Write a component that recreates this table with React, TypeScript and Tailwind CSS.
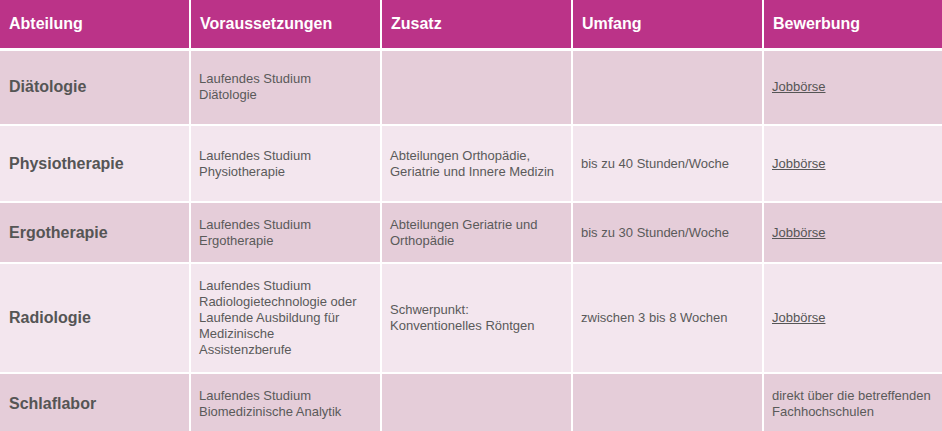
const rows: { name: string; req: string[]; extra: string[]; scope: string; apply: string[] | 'link'; h: string; tone: 'dark' | 'light' }[] = [
  { name: 'Diätologie', req: ['Laufendes Studium', 'Diätologie'], extra: [], scope: '', apply: 'link', h: 'h-[76px]', tone: 'dark' },
  {
    name: 'Physiotherapie',
    req: ['Laufendes Studium', 'Physiotherapie'],
    extra: ['Abteilungen Orthopädie,', 'Geriatrie und Innere Medizin'],
    scope: 'bis zu 40 Stunden/Woche',
    apply: 'link',
    h: 'h-[77px]',
    tone: 'light',
  },
  {
    name: 'Ergotherapie',
    req: ['Laufendes Studium', 'Ergotherapie'],
    extra: ['Abteilungen Geriatrie und', 'Orthopädie'],
    scope: 'bis zu 30 Stunden/Woche',
    apply: 'link',
    h: 'h-[61px]',
    tone: 'dark',
  },
  {
    name: 'Radiologie',
    req: ['Laufendes Studium', 'Radiologietechnologie oder', 'Laufende Ausbildung für', 'Medizinische', 'Assistenzberufe'],
    extra: ['Schwerpunkt:', 'Konventionelles Röntgen'],
    scope: 'zwischen 3 bis 8 Wochen',
    apply: 'link',
    h: 'h-[110px]',
    tone: 'light',
  },
  {
    name: 'Schlaflabor',
    req: ['Laufendes Studium', 'Biomedizinische Analytik'],
    extra: [],
    scope: '',
    apply: ['direkt über die betreffenden', 'Fachhochschulen'],
    h: 'h-[61px]',
    tone: 'dark',
  },
];

function Lines({ lines }: { lines: string[] }) {
  return (
    <>
      {lines.map((l, i) => (
        <div key={i}>{l}</div>
      ))}
    </>
  );
}

export default function App() {
  const cell = 'border-r-2 border-b-2 border-white px-[8px] align-middle text-[13px] leading-[16px] text-[#5a5a5a]';
  return (
    <div className="w-[942px] h-[431px] overflow-hidden bg-white" style={{ fontFamily: '"Liberation Sans", Arial, sans-serif' }}>
      <table className="border-collapse table-fixed w-[954px]">
        <colgroup>
          <col className="w-[190px]" />
          <col className="w-[191px]" />
          <col className="w-[191px]" />
          <col className="w-[191px]" />
          <col className="w-[191px]" />
        </colgroup>
        <thead>
          <tr className="h-[49px] bg-[#bb3388]">
            {['Abteilung', 'Voraussetzungen', 'Zusatz', 'Umfang', 'Bewerbung'].map((t) => (
              <th
                key={t}
                className="border-r-2 border-b-[3px] border-white px-[9px] text-left align-middle text-[16px] font-bold text-white"
              >
                {t}
              </th>
            ))}
          </tr>
        </thead>
        <tbody>
          {rows.map((r) => (
            <tr key={r.name} className={`${r.h} ${r.tone === 'dark' ? 'bg-[#e5cdd9]' : 'bg-[#f3e6ee]'}`}>
              <td className="border-r-2 border-b-2 border-white px-[9px] align-middle text-[16px] font-bold text-[#555555]">
                {r.name}
              </td>
              <td className={cell}>
                <Lines lines={r.req} />
              </td>
              <td className={cell}>
                <Lines lines={r.extra} />
              </td>
              <td className={cell}>{r.scope}</td>
              <td className={cell}>
                {r.apply === 'link' ? (
                  <a href="#" className="underline text-[#555555]">
                    Jobbörse
                  </a>
                ) : (
                  <Lines lines={r.apply} />
                )}
              </td>
            </tr>
          ))}
        </tbody>
      </table>
    </div>
  );
}
